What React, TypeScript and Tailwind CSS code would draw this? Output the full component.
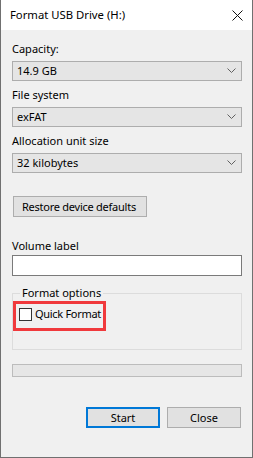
import React from "react";

const font = { fontFamily: '"Noto Sans", "Segoe UI", sans-serif' };

function Chevron() {
  return (
    <svg width="9" height="6" viewBox="0 0 9 6" className="block">
      <polyline points="0.5,0.5 4.5,4.5 8.5,0.5" fill="none" stroke="#606060" strokeWidth="1" />
    </svg>
  );
}

function Combo({ value }: { value: string }) {
  return (
    <div className="mt-[4px] flex h-[20px] w-[230px] items-center justify-between whitespace-nowrap border border-[#adadad] bg-[#e5e5e5] pl-[4px] pr-[5px] text-[11px] leading-[16px] text-black">
      <span>{value}</span>
      <Chevron />
    </div>
  );
}

function Label({ text, className = "" }: { text: string; className?: string }) {
  return <div className={"h-[16px] whitespace-nowrap text-[11px] leading-[16px] text-black " + className}>{text}</div>;
}

export default function App() {
  return (
    <div
      className="flex h-[458px] w-[253px] flex-col border-x border-b border-[#707070] bg-[#f0f0f0] text-black"
      style={font}
    >
      <div className="flex h-[30px] shrink-0 items-center justify-between bg-white pl-[9px] pr-[9px]">
        <span className="whitespace-nowrap text-[11.3px] leading-[16px]">Format USB Drive (H:)</span>
        <svg width="11" height="11" viewBox="0 0 11 11" className="block">
          <path d="M0.5 0.5 L10.5 10.5 M10.5 0.5 L0.5 10.5" stroke="#111" strokeWidth="1" fill="none" />
        </svg>
      </div>
      <div className="flex flex-col pl-[11px]">
        <Label text="Capacity:" className="mt-[11px]" />
        <Combo value="14.9 GB" />
        <Label text="File system" className="mt-[6px]" />
        <Combo value="exFAT" />
        <Label text="Allocation unit size" className="mt-[6px]" />
        <Combo value="32 kilobytes" />
        <button className="ml-[1px] mt-[23px] flex h-[21px] w-[134px] items-center justify-start whitespace-nowrap border border-[#adadad] bg-[#e1e1e1] pl-[8px] text-[11px] leading-[16px] tracking-[-0.25px] text-black">
          Restore device defaults
        </button>
        <Label text="Volume label" className="mt-[21px]" />
        <div className="mt-[1px] h-[21px] w-[230px] border border-[#7a7a7a] bg-white" />
        <fieldset className="mt-[9px] w-[230px] border border-[#dcdcdc] pb-[18px]">
          <legend className="ml-[7px] whitespace-nowrap px-[2px] text-[11px] leading-[16px]">Format options</legend>
          <div className="flex h-[30px] w-[93px] items-start whitespace-nowrap border-[3px] border-[#f0393c] pl-[3px] pt-[4px]">
            <div className="h-[13px] w-[13px] shrink-0 border border-[#333] bg-white" />
            <span className="ml-[3px] -mt-[2px] text-[11px] leading-[16px] tracking-[-0.3px]">Quick Format</span>
          </div>
        </fieldset>
        <div className="mt-[14px] h-[13px] w-[230px] border border-[#bcbcbc] bg-[#e6e6e6]" />
        <div className="mt-[30px] flex pl-[74px]">
          <button className="flex h-[21px] w-[74px] items-center justify-center border-2 border-[#0078d7] bg-[#e1e1e1] text-[11px] leading-[16px]">
            Start
          </button>
          <button className="ml-[7px] flex h-[21px] w-[74px] items-center justify-center border border-[#adadad] bg-[#e1e1e1] text-[11px] leading-[16px]">
            Close
          </button>
        </div>
      </div>
    </div>
  );
}
